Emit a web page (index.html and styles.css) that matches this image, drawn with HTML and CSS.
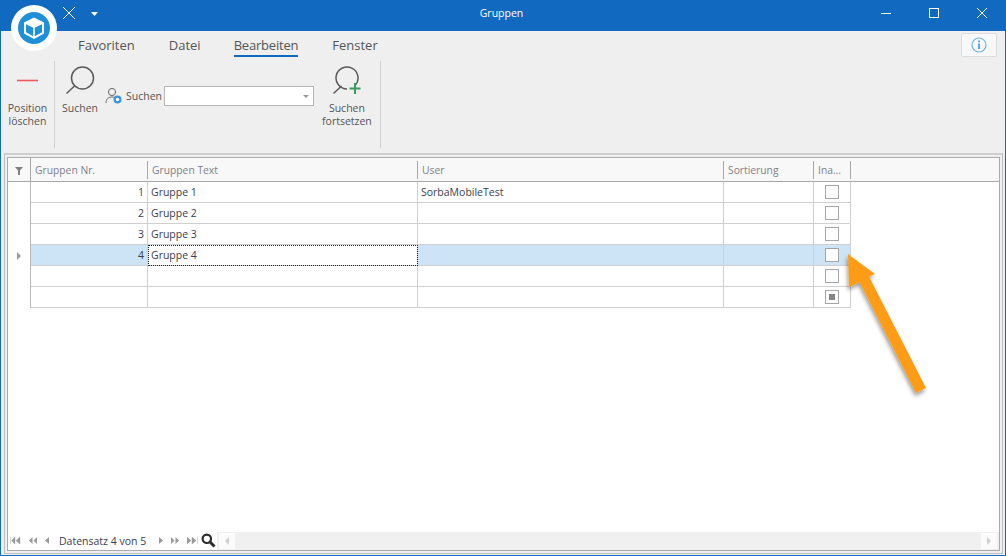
FILE: index.html
```html
<!DOCTYPE html>
<html lang="de">
<head>
    <meta charset="UTF-8">
    <title>Gruppen</title>
    <link rel="stylesheet" href="styles.css">
</head>
<body>
    <div class="window">
        <header class="titlebar">
            <div class="quick-access">
                <svg class="qa-close" width="14" height="14" viewBox="0 0 14 14"><path d="M1 1L13 13M13 1L1 13" stroke="#fff" stroke-width="1"/></svg>
                <svg class="qa-drop" width="7" height="4" viewBox="0 0 7 4"><path d="M0 0H7L3.5 4Z" fill="#fff"/></svg>
            </div>
            <div class="title">Gruppen</div>
            <div class="win-buttons">
                <svg width="12" height="12" viewBox="0 0 12 12"><path d="M1 6.5H11" stroke="#fff"/></svg>
                <svg width="12" height="12" viewBox="0 0 12 12"><rect x="1.5" y="1.5" width="9" height="9" fill="none" stroke="#fff"/></svg>
                <svg width="12" height="12" viewBox="0 0 12 12"><path d="M1 1L11 11M11 1L1 11" stroke="#fff"/></svg>
            </div>
        </header>

        <!-- Logo sits over title bar and ribbon -->
        <div class="logo">
            <svg width="32" height="32" viewBox="0 0 32 32">
                <circle cx="16" cy="16" r="16" fill="#1e8fd8"/>
                <path d="M16 5.500L26 10.500V21.500L16 27L6 21.500V10.500Z" fill="#fff"/>
                <path d="M8 12.200L15.200 15.800V24.200L8 20.300ZM24 12.200L16.800 15.800V24.200L24 20.300Z" fill="#1e8fd8"/>
            </svg>
        </div>

        <section class="ribbon">
            <nav class="tabs">
                <span class="tab">Favoriten</span>
                <span class="tab">Datei</span>
                <span class="tab active">Bearbeiten</span>
                <span class="tab">Fenster</span>
                <span class="info-btn">
                    <svg width="16" height="16" viewBox="0 0 16 16">
                        <circle cx="8" cy="8" r="7" fill="none" stroke="#6db4e4" stroke-width="1.2"/>
                        <path d="M8 3.6V5.2M8 6.6V12" stroke="#4aa0dc" stroke-width="1.8"/>
                    </svg>
                </span>
            </nav>
            <div class="tools">
                <div class="group group-pos">
                    <div class="big-btn">
                        <svg class="big-icon" width="32" height="32" viewBox="0 0 32 32"><path d="M5 15.5H26" stroke="#ee5a5a" stroke-width="1.6"/></svg>
                        <span>Position<br>löschen</span>
                    </div>
                </div>
                <div class="group group-search">
                    <div class="big-btn">
                        <svg class="big-icon" width="32" height="32" viewBox="0 0 32 32">
                            <circle cx="18.5" cy="13" r="11" fill="none" stroke="#5a5a5a" stroke-width="1.5"/>
                            <path d="M10.5 21L2.5 28.5" stroke="#5a5a5a" stroke-width="1.5"/>
                        </svg>
                        <span>Suchen</span>
                    </div>
                    <div class="search-field">
                        <svg width="18" height="18" viewBox="0 0 18 18">
                            <circle cx="7" cy="5" r="3.6" fill="none" stroke="#666" stroke-width="1"/>
                            <path d="M1 16C1 11.500 4 10 7 10C8 10 9 10.200 9.800 10.600" fill="none" stroke="#666" stroke-width="1"/>
                            <circle cx="12.500" cy="12.500" r="4" fill="#3e93d6"/>
                            <circle cx="12.500" cy="12.500" r="1.700" fill="#fff"/>
                        </svg>
                        <span>Suchen</span>
                        <div class="combo"><i class="combo-arrow"></i></div>
                    </div>
                    <div class="big-btn btn-next">
                        <svg class="big-icon" width="32" height="32" viewBox="0 0 32 32">
                            <path d="M24.500 20A11 11 0 1 0 16 24" fill="none" stroke="#5a5a5a" stroke-width="1.500"/>
                            <path d="M10.500 21L2.500 28.500" stroke="#5a5a5a" stroke-width="1.500"/>
                            <path d="M24 18V29M18.500 23.500H29.500" stroke="#3d9a5b" stroke-width="2"/>
                        </svg>
                        <span>Suchen<br>fortsetzen</span>
                    </div>
                </div>
            </div>
        </section>

        <section class="grid-frame">
            <div class="grid-body">
                <table class="grid">
                    <colgroup>
                        <col class="c-ind"><col class="c-nr"><col class="c-text"><col class="c-user"><col class="c-sort"><col class="c-ina"><col>
                    </colgroup>
                    <thead>
                        <tr>
                            <th class="ind"><svg width="8" height="8" viewBox="0 0 8 8"><path d="M0 0H8L5 3.500V8H3V3.500Z" fill="#808080"/></svg></th>
                            <th>Gruppen Nr.</th>
                            <th>Gruppen Text</th>
                            <th>User</th>
                            <th>Sortierung</th>
                            <th>Ina...</th>
                            <th class="rest"></th>
                        </tr>
                    </thead>
                    <tbody>
                        <tr><td class="ind"></td><td class="num">1</td><td>Gruppe 1</td><td>SorbaMobileTest</td><td></td><td class="chk"><i class="box"></i></td><td class="rest"></td></tr>
                        <tr><td class="ind"></td><td class="num">2</td><td>Gruppe 2</td><td></td><td></td><td class="chk"><i class="box"></i></td><td class="rest"></td></tr>
                        <tr><td class="ind"></td><td class="num">3</td><td>Gruppe 3</td><td></td><td></td><td class="chk"><i class="box"></i></td><td class="rest"></td></tr>
                        <tr class="selected"><td class="ind"><i class="row-arrow"></i></td><td class="num">4</td><td class="focused">Gruppe 4</td><td></td><td></td><td class="chk"><i class="box"></i></td><td class="rest"></td></tr>
                        <tr><td class="ind"></td><td class="num"></td><td></td><td></td><td></td><td class="chk"><i class="box"></i></td><td class="rest"></td></tr>
                        <tr><td class="ind"></td><td class="num"></td><td></td><td></td><td></td><td class="chk"><i class="box mixed"></i></td><td class="rest"></td></tr>
                    </tbody>
                </table>
            </div>
            <footer class="navigator">
                <div class="nav-btns">
                    <svg width="11" height="7" viewBox="0 0 11 7"><path d="M0.500 0V7M5 0V7L1.500 3.500ZM10 0V7L6 3.500Z" fill="#999" stroke="#999" stroke-width=".4"/></svg>
                    <svg width="8" height="7" viewBox="0 0 8 7"><path d="M3.500 0V7L0 3.500ZM8 0V7L4.500 3.500Z" fill="#999"/></svg>
                    <svg width="4" height="7" viewBox="0 0 4 7"><path d="M4 0V7L0 3.500Z" fill="#999"/></svg>
                </div>
                <span class="record">Datensatz 4 von 5</span>
                <div class="nav-btns nav-next">
                    <svg width="4" height="7" viewBox="0 0 4 7"><path d="M0 0V7L4 3.500Z" fill="#999"/></svg>
                    <svg width="8" height="7" viewBox="0 0 8 7"><path d="M0 0V7L3.500 3.500ZM4.500 0V7L8 3.500Z" fill="#999"/></svg>
                    <svg width="11" height="7" viewBox="0 0 11 7"><path d="M0 0V7L4 3.500ZM5 0V7L9 3.500ZM10.500 0V7" fill="#999" stroke="#999" stroke-width=".4"/></svg>
                </div>
                <svg class="nav-search" width="15" height="15" viewBox="0 0 15 15">
                    <circle cx="5.800" cy="5.800" r="4.200" fill="none" stroke="#2b2b2b" stroke-width="2.200"/>
                    <path d="M9 9L13.500 13.500" stroke="#2b2b2b" stroke-width="3"/>
                </svg>
                <div class="scrollbar">
                    <span class="scroll-btn"><i class="scroll-left"></i></span>
                    <span class="scroll-btn"><i class="scroll-right"></i></span>
                </div>
            </footer>
        </section>

        <!-- Annotation arrow drawn over the grid -->
        <svg class="annotation" width="100" height="160" viewBox="0 0 100 160">
            <defs>
                <filter id="arrowShadow" x="-30%" y="-30%" width="160%" height="160%">
                    <feDropShadow dx="-1" dy="3" stdDeviation="2" flood-color="#000" flood-opacity=".4"/>
                </filter>
            </defs>
            <path d="M7 4L34 24L28 26.500L85 138L75 143L18.500 32L8 37.500Z" fill="#ff9c17" filter="url(#arrowShadow)"/>
        </svg>
    </div>
</body>
</html>
```

FILE: styles.css
```css
* {
    box-sizing: border-box;
}
html, body {
    height: 100%;
}
body {
    margin: 0;
    overflow: hidden;
    background: #fff;
    font-family: "Open Sans", "Liberation Sans", sans-serif;
    color: #444;
}
.window {
    position: relative;
    width: 1006px;
    height: 556px;
    display: flex;
    flex-direction: column;
    background: #efefef;
    border-left: 1px solid #1269c0;
    border-right: 1px solid #1269c0;
    border-bottom: 1px solid #1269c0;
}

/* Title bar */
.titlebar {
    height: 31px;
    flex: none;
    margin: 0 -1px;
    padding-bottom: 5px;
    display: flex;
    align-items: center;
    background: #1269c0;
    color: #fff;
    font-size: 10.5px;
}
.quick-access {
    width: 108px;
    padding-left: 62px;
    display: flex;
    align-items: center;
    gap: 15px;
}
.qa-drop {
    margin-top: 1px;
}
.title {
    flex: 1;
    text-align: center;
    padding-left: 15px;
}
.win-buttons {
    width: 126px;
    display: flex;
    align-items: center;
    gap: 36px;
}
.logo {
    position: absolute;
    left: 10px;
    top: 5px;
    width: 46px;
    height: 46px;
    border-radius: 50%;
    background: #fff;
    display: flex;
    align-items: center;
    justify-content: center;
}

/* Ribbon */
.ribbon {
    height: 122px;
    flex: none;
}
.tabs {
    height: 30px;
    padding-left: 77px;
    display: flex;
    align-items: flex-start;
    font-size: 13px;
    gap: 34px;
    color: #555;
}
.tab {
    margin-top: 6px;
    height: 20px;
    line-height: 17px;
}
.tab.active {
    margin-left: -1px;
    letter-spacing: -.2px;
    border-bottom: 2px solid #1269c0;
}
.info-btn {
    margin-left: auto;
    margin-right: 8px;
    margin-top: 2px;
    width: 36px;
    height: 24px;
    background: #f8f8f8;
    border: 1px solid #dcdcdc;
    border-radius: 2px;
    display: flex;
    align-items: center;
    justify-content: center;
}
.tools {
    height: 87px;
    display: flex;
    font-size: 10.5px;
    line-height: 13px;
    color: #555;
}
.group {
    height: 87px;
    display: flex;
    align-items: flex-start;
    border-right: 1px solid #d0d0d0;
}
.group-pos {
    width: 54px;
    justify-content: center;
}
.group-search {
    width: 326px;
    padding-left: 7px;
}
.big-btn {
    padding-top: 4px;
    display: flex;
    flex-direction: column;
    align-items: center;
    text-align: center;
}
.big-icon {
    margin-bottom: 5px;
}
.search-field {
    margin-top: 25px;
    margin-left: 7px;
    display: flex;
    align-items: center;
    gap: 3px;
}
.combo {
    width: 150px;
    height: 20px;
    margin-left: -1px;
    background: #fff;
    border: 1px solid #b5b5b5;
    position: relative;
}
.combo-arrow {
    position: absolute;
    right: 4px;
    top: 8px;
    border-left: 3px solid transparent;
    border-right: 3px solid transparent;
    border-top: 3px solid #999;
}
.btn-next {
    margin-left: 8px;
}

/* Grid */
.grid-frame {
    flex: 1;
    min-height: 0;
    margin: 0 2px 1px 3px;
    padding: 2px;
    display: flex;
    flex-direction: column;
    border-top: 2px solid #cfcfcf;
    border-left: 1px solid #bdbdbd;
    border-right: 1px solid #bdbdbd;
    border-bottom: 1px solid #bdbdbd;
    background: #efefef;
}
.grid-body {
    flex: 1;
    min-height: 0;
    background: #fff;
    border: 1px solid #aaa;
    border-bottom: none;
}
.grid {
    width: 100%;
    table-layout: fixed;
    border-collapse: separate;
    border-spacing: 0;
    font-size: 10.5px;
}
.c-ind { width: 23px; }
.c-nr { width: 117px; }
.c-text { width: 270px; }
.c-user { width: 306px; }
.c-sort { width: 90px; }
.c-ina { width: 37px; }
.grid th {
    height: 24px;
    padding: 0 4px;
    text-align: left;
    font-weight: normal;
    font-size: 10.3px;
    color: #7f7f8a;
    background: #f8f8f8 linear-gradient(#a8a8a8, #a8a8a8) right 3px / 1px 18px no-repeat;
    border-bottom: 1px solid #a8a8a8;
}
.grid th.ind {
    text-align: center;
    padding: 2px 0 0;
    background: #f8f8f8;
    border-right: 1px solid #a8a8a8;
}
.grid th.rest {
    background: #f8f8f8;
}
.grid td {
    height: 21px;
    padding: 0 3px;
    color: #3c3c50;
    background: #fff;
    border-bottom: 1px solid #cfcfcf;
    border-right: 1px solid #cfcfcf;
    white-space: nowrap;
}
.grid td.ind {
    background: #fff;
    border-bottom: none;
    border-right: 1px solid #b8b8b8;
    text-align: center;
    padding: 0;
}
.grid td.rest {
    background: #fff;
    border: none;
}
.grid td.num {
    text-align: right;
}
.grid td.chk {
    text-align: center;
    padding: 0;
    line-height: 0;
}
.selected td {
    background: #cce4f6;
}
.grid .selected td.focused {
    background: #fff;
    outline: 1px dotted #222;
    outline-offset: -1px;
}
.box {
    display: inline-flex;
    align-items: center;
    justify-content: center;
    width: 14px;
    height: 14px;
    background: #fff;
    border: 1px solid #a5a5a5;
}
.box.mixed::after {
    content: "";
    width: 6px;
    height: 6px;
    background: #858585;
}
.row-arrow {
    display: inline-block;
    border-top: 4px solid transparent;
    border-bottom: 4px solid transparent;
    border-left: 4px solid #999;
}

/* Record navigator */
.navigator {
    height: 20px;
    flex: none;
    display: flex;
    align-items: center;
    background: #fff;
    border-left: 1px solid #aaa;
    border-right: 1px solid #aaa;
    border-bottom: 1px solid #aaa;
    padding-left: 2px;
    font-size: 10.5px;
    color: #3c3c50;
}
.nav-btns {
    display: flex;
    align-items: center;
    gap: 8px;
}
.nav-next {
    margin-left: 13px;
}
.record {
    margin-left: 10px;
}
.nav-search {
    margin-left: 3px;
}
.scrollbar {
    flex: 1;
    height: 18px;
    margin-left: 1px;
    padding: 0 2px;
    background: #f0f0f0;
    display: flex;
    justify-content: space-between;
}
.scroll-btn {
    width: 16px;
    height: 16px;
    margin: 1px 0;
    background: #fbfbfb;
    display: flex;
    align-items: center;
    justify-content: center;
}
.scroll-left {
    border-top: 4px solid transparent;
    border-bottom: 4px solid transparent;
    border-right: 4px solid #d0d0d0;
}
.scroll-right {
    border-top: 4px solid transparent;
    border-bottom: 4px solid transparent;
    border-left: 4px solid #d0d0d0;
}

/* Annotation */
.annotation {
    position: absolute;
    left: 840px;
    top: 250px;
}
```
